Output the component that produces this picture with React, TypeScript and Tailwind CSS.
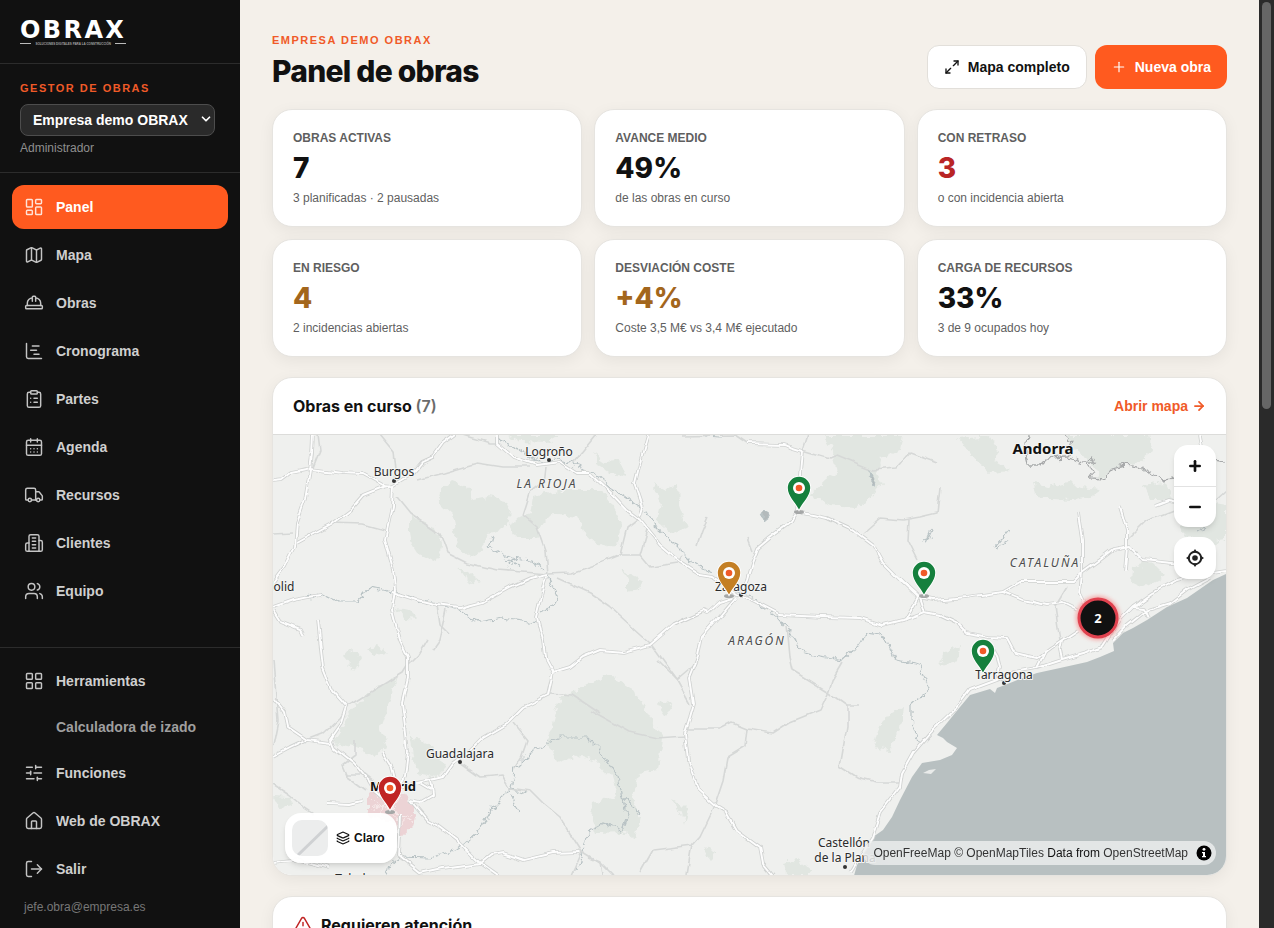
import React from 'react';
import {
  ArrowRight,
  CalendarDays,
  ChartGantt,
  ChevronDown,
  ClipboardList,
  HardHat,
  House,
  Layers,
  LayoutDashboard,
  LayoutGrid,
  LogOut,
  Map as MapIcon,
  Maximize2,
  Minus,
  Plus,
  SlidersHorizontal,
  TriangleAlert,
  Truck,
  Users,
} from 'lucide-react';

type IconType = React.ComponentType<{ className?: string; strokeWidth?: number }>;

// Tower with two side wings
const ClientsIcon: IconType = ({ className, strokeWidth = 2 }) => (
  <svg
    viewBox="0 0 24 24"
    fill="none"
    stroke="currentColor"
    strokeWidth={strokeWidth}
    strokeLinecap="round"
    strokeLinejoin="round"
    className={className}
    aria-hidden="true"
  >
    <path d="M6 22V4a2 2 0 0 1 2-2h8a2 2 0 0 1 2 2v18Z" />
    <path d="M6 12H4a2 2 0 0 0-2 2v6a2 2 0 0 0 2 2h2" />
    <path d="M18 9h2a2 2 0 0 1 2 2v9a2 2 0 0 1-2 2h-2" />
    <path d="M10 6h4M10 10h4M10 14h4M10 18h4" />
  </svg>
);

interface NavEntry {
  label: string;
  icon?: IconType;
  active?: boolean;
}

const mainNav: NavEntry[] = [
  { label: 'Panel', icon: LayoutDashboard, active: true },
  { label: 'Mapa', icon: MapIcon },
  { label: 'Obras', icon: HardHat },
  { label: 'Cronograma', icon: ChartGantt },
  { label: 'Partes', icon: ClipboardList },
  { label: 'Agenda', icon: CalendarDays },
  { label: 'Recursos', icon: Truck },
  { label: 'Clientes', icon: ClientsIcon },
  { label: 'Equipo', icon: Users },
];

const footerNav: NavEntry[] = [
  { label: 'Herramientas', icon: LayoutGrid },
  { label: 'Calculadora de izado' },
  { label: 'Funciones', icon: SlidersHorizontal },
  { label: 'Web de OBRAX', icon: House },
  { label: 'Salir', icon: LogOut },
];

const stats = [
  { label: 'Obras activas', value: '7', note: '3 planificadas · 2 pausadas', tone: 'text-[#111111]' },
  { label: 'Avance medio', value: '49%', note: 'de las obras en curso', tone: 'text-[#111111]' },
  { label: 'Con retraso', value: '3', note: 'o con incidencia abierta', tone: 'text-[#b92525]' },
  { label: 'En riesgo', value: '4', note: '2 incidencias abiertas', tone: 'text-[#a3661c]' },
  { label: 'Desviación coste', value: '+4%', note: 'Coste 3,5 M€ vs 3,4 M€ ejecutado', tone: 'text-[#a3661c]' },
  { label: 'Carga de recursos', value: '33%', note: '3 de 9 ocupados hoy', tone: 'text-[#111111]' },
];

const forests = [
  '437,493 452,482 467,487 473,500 488,497 503,500 510,510 509,521 503,530 488,533 483,550 470,557 457,545 455,530 453,517 440,505',
  '410,513 424,522 437,530 442,543 437,562 417,553 412,545 410,533',
  '533,497 563,490 600,490 610,503 622,523 618,543 607,547 587,537 577,517 553,513 543,523 537,537 517,537 510,523 530,513',
  '460,567 470,573 480,580 470,584',
  '823,435 903,435 900,450 880,458 877,473 883,483 870,498 857,507 830,505 810,495 826,480 837,473 833,450',
  '653,483 665,490 677,483 678,503 687,527 673,533 657,520 661,505',
  '593,453 605,461 617,460 627,477 612,474 600,466',
  '1067,435 1150,435 1153,450 1137,463 1113,468 1100,478 1090,460 1075,450',
  '1033,483 1050,487 1067,482 1080,488 1100,490 1090,497 1073,500 1050,499 1037,497',
  '1133,567 1150,562 1165,577 1143,588 1132,583',
  '1143,485 1165,482 1173,500 1150,500',
  '397,677 387,710 380,730 387,747 373,755 353,747 333,742 342,728 350,713 367,693 380,688',
  '342,657 350,648 362,658 355,672',
  '368,650 378,646 388,654 375,656',
  '410,733 420,741 433,747 447,767 437,777 417,773',
  '560,697 583,687 597,680 610,675 633,690 650,717 662,737 658,770 640,773 633,797 640,817 635,840 623,832 597,833 592,820 593,803 617,795 612,778 597,762 580,755 557,763 547,740',
  '877,733 883,718 903,707 900,728 890,750 873,747',
  '672,799 680,803 687,810 684,825 682,812',
  '657,702 663,698 671,708 666,715',
  '703,850 710,846 717,853 710,860',
  '785,862 797,859 812,870 808,875 787,875',
  '507,435 560,435 548,442 520,441',
  '958,439 990,436 998,450 993,460 1010,470 990,472 978,462',
  '393,609 410,611 418,619 404,618',
  '622,570 634,576 643,580 640,590 628,592 628,580',
  '945,653 960,646 958,660 940,665',
  '1180,495 1226,505 1226,540 1200,545 1180,530',
  '273,797 290,798 293,806 280,808',
];

const motorways = [
  'M313 434L312 455 310 470 305 500 297 523 295 547 285 567 273 583',
  'M273 480L282 479 290 473 310 469 342 473 363 474 383 485 393 486',
  'M393 485L392 507 385 540 393 570 395 590 392 610 397 630 400 640 408 657 408 677 402 703 405 727 408 753 405 777 400 787',
  'M393 485L413 473 422 462 433 457 443 443 455 434',
  'M393 485L383 487 363 495 350 510 330 525 315 533 297 543',
  'M497 435L497 443 513 457 537 465 560 462 577 473 590 473 610 492 627 510 640 520 660 545 680 562 700 575 713 577 737 593 757 603 780 615 823 617 860 618 883 625 903 620 925 612 940 615 957 623 967 633 990 637 1007 638 1015 653 1037 658 1050 648 1062 640 1077 630',
  'M803 450L801 475 798 510 790 522 770 537 758 547 752 563 747 580 740 597',
  'M803 513L827 518 853 530 873 545 883 563 900 580 918 597',
  'M737 597L720 617 702 637 698 657 690 677 694 703 690 717 685 733 688 760 698 790 717 807 727 813 737 830 760 847 763 863 773 875',
  'M733 598L720 602 708 613 703 611 673 625 650 645 623 652 600 650 583 657 570 667 553 672 548 695 523 707 507 723 483 737 467 753 453 763 443 777 417 783 400 787',
  'M553 672L545 657 543 640 540 630 537 617 547 577',
  'M318 620L320 640 323 667 332 690 347 707 342 723 330 740 333 747 353 763 367 780 373 790 385 800',
  'M273 698L285 713 288 727 307 740 330 743',
  'M273 757L290 748 307 740',
  'M410 800L427 820 440 827 457 840 480 863 497 875',
  'M400 815L398 855 420 873 443 868 480 863 490 855 503 853 523 860 553 853 580 852',
  'M273 863L300 860 330 868',
  'M273 607L293 600 320 595M392 592L417 600 437 605 460 608 483 602 510 587 530 578 547 574',
  'M273 611L280 622 300 630 303 636',
  'M430 780L432 795 420 802 410 800M418 783L430 790',
  'M382 752L390 765 394 780M327 803L350 804 362 801',
  'M1103 647L1120 620 1133 607 1153 593 1177 580 1200 574 1226 570',
  'M1113 641L1127 626 1147 610 1170 603 1187 590 1210 578',
  'M1133 607L1143 608 1148 618',
  'M1103 647L1087 653 1062 660 1037 668 1015 672 997 680 970 690 957 707 933 730 913 753 902 773 900 787 880 813 872 837 860 855 850 872',
  'M1078 513L1082 540 1082 573 1080 593 1086 605',
  'M1120 507L1127 530 1127 547 1125 570',
  'M1082 573L1100 560 1113 550 1130 547 1143 560 1173 563 1190 565',
  'M918 597L933 600 967 597 1003 592 1020 582 1073 582 1082 573',
  'M1003 592L1023 600 1047 605 1063 603 1077 610',
  'M925 612L920 597 908 586 900 578M918 597L905 620',
  'M990 643L997 655 1000 668 997 680',
  'M1062 640L1060 650 1062 660M1045 652L1037 668',
  'M648 435L640 463 635 483 643 507 640 517',
  'M747 443L783 444 803 450',
  'M1155 505L1168 500 1178 502M1200 435L1203 455',
];

const minorRoads = [
  'M417 480L443 473 477 463 503 467 530 467',
  'M380 434L393 450 395 470 394 480',
  'M397 497L410 513 440 533 447 553 467 563 497 570 547 574 570 573 600 563 620 555',
  'M547 574L545 550 537 527 523 515 530 493 543 483 545 467',
  'M557 578L590 593 610 607 650 643 677 680 690 703',
  'M330 523L363 524 385 530M273 534L292 533',
  'M318 434L320 450 312 470',
  'M460 434L490 443 497 443M575 460L595 435',
  'M620 555L627 527 640 517M620 555L640 555 650 567 677 563 683 555M640 555L648 527',
  'M708 516L702 530 697 545M748 537L753 550',
  'M787 625L790 657 793 670 830 693 847 705 847 727 840 767 857 778 877 783 900 783M847 705L859 705',
  'M688 729L720 729 732 723 747 729 773 733 790 722 820 710 828 693 832 680 842 663',
  'M747 729L745 747 727 758 723 780 713 810 700 837 693 845 653 850 640 873M693 845L688 875',
  'M590 710L630 732 657 738 685 736',
  'M657 660L677 680 697 663',
  'M803 450L830 458 837 455 873 470 897 468 910 453 937 463',
  'M863 533L880 518 903 520 920 517 937 513 940 487M908 520L907 540 917 560M683 436L735 435 747 443M808 435L803 450',
  'M1127 540L1147 520 1173 510M1067 587L1055 607 1060 640',
  'M427 640L418 655 408 665 403 673 380 687 348 707',
  'M273 785L288 795 303 807 315 815M273 745L278 720 273 660',
  'M342 717L325 733 307 740',
  'M513 723L527 740 521 757 513 770',
  'M460 763L480 777 503 775 510 787 530 790 543 803 560 817 582 852 572 875M582 852L600 863 612 875',
  'M550 693L573 695 600 713M437 605L440 625 450 635M433 650L440 640 447 610',
  'M355 740L355 755 342 765 347 777 365 790M345 775L365 775 378 785',
  'M590 858L600 862 602 875M1226 490L1215 500M1130 550L1140 553',
];

const rivers = [
  'M293 600L320 593 338 602 357 602 370 587 392 592 417 600 457 608 477 622 503 618 537 623',
  'M493 537L490 547 500 553 512 558 530 560 545 570',
  'M547 575L558 600 555 605 540 612',
  'M505 560L518 565M508 566L515 559M512 557L513 567',
  'M387 875L390 865 400 857 430 858 457 850 477 833 490 810 510 790 513 770 533 750 560 737 587 737 600 750 607 760 617 777 622 797 627 817 622 830 603 823 590 830 585 840 578 870',
  'M510 790L528 793M512 795L518 814M622 797L640 812',
  'M497 436L505 444 520 450 540 462 555 458 575 465 590 470 610 487 627 498 647 513 657 530 673 543 690 560 713 573',
  'M735 590L750 597 777 617 790 633 803 653 820 656 843 660 857 647 867 633 880 635 887 640 895 660 917 663 920 668 930 690 920 698 910 707 910 720 920 743',
];

const borders = [
  'M1027 435L1025 453 1028 465 1040 465 1047 458 1067 457 1087 463 1092 477 1103 478 1113 468 1125 465 1140 467 1160 480 1175 479',
  'M1063 435L1073 443 1067 457M1091 457L1096 463 1090 463Z',
  'M1216 460L1226 462',
];

interface PlaceLabel {
  name: string;
  x: number;
  y: number;
  className: string;
  dot?: [number, number];
}

const city = 'text-[12px] fill-[#2b2b2b]';
const region = 'text-[12px] italic tracking-[2px] fill-[#4d4d4d]';

const places: PlaceLabel[] = [
  { name: 'Logroño', x: 549, y: 456, className: city, dot: [549, 460] },
  { name: 'Burgos', x: 394, y: 476, className: city, dot: [394, 481] },
  { name: 'LA RIOJA', x: 547, y: 488, className: region },
  { name: 'Valladolid', x: 267, y: 591, className: city },
  { name: 'Zaragoza', x: 741, y: 591, className: city, dot: [741, 595] },
  { name: 'ARAGÓN', x: 757, y: 645, className: region },
  { name: 'CATALUÑA', x: 1045, y: 567, className: region },
  { name: 'Tarragona', x: 1004, y: 679, className: city, dot: [1004, 683] },
  { name: 'Guadalajara', x: 460, y: 758, className: city, dot: [460, 762] },
  { name: 'Castellón', x: 844, y: 847, className: city },
  { name: 'de la Plana', x: 845, y: 862, className: city, dot: [845, 867] },
  { name: 'Toledo', x: 354, y: 883, className: city },
  { name: 'Madrid', x: 393, y: 791, className: 'text-[13px] font-bold fill-[#111111]' },
  { name: 'Andorra', x: 1043, y: 454, className: 'text-[15px] font-bold fill-[#111111]' },
];

const pins = [
  { x: 799, y: 488, color: '#15803d' },
  { x: 924, y: 573, color: '#15803d' },
  { x: 983, y: 651, color: '#15803d' },
  { x: 729, y: 573, color: '#c47f24' },
  { x: 390, y: 788, color: '#c02424' },
];

const WorksMap = () => (
  <svg
    viewBox="273 435 953 440"
    preserveAspectRatio="xMidYMid slice"
    className="block h-full w-full font-['Noto_Sans',sans-serif]"
    role="img"
    aria-label="Obras en curso"
  >
    <defs>
      <filter id="rough" x="-5%" y="-5%" width="110%" height="110%" colorInterpolationFilters="sRGB">
        <feTurbulence type="fractalNoise" baseFrequency="0.12" numOctaves="3" seed="4" />
        <feDisplacementMap in="SourceGraphic" scale="10" xChannelSelector="R" yChannelSelector="G" />
      </filter>
      <filter id="wavy" x="-5%" y="-5%" width="110%" height="110%" colorInterpolationFilters="sRGB">
        <feTurbulence type="fractalNoise" baseFrequency="0.05" numOctaves="2" seed="9" />
        <feDisplacementMap in="SourceGraphic" scale="7" xChannelSelector="R" yChannelSelector="G" />
      </filter>
      <filter id="glow" x="-50%" y="-50%" width="200%" height="200%">
        <feGaussianBlur stdDeviation="2" />
      </filter>
    </defs>
    <rect x="273" y="435" width="953" height="440" fill="#eff0ee" />
    <g filter="url(#rough)" fill="#e1e6e1">
      {forests.map(points => (
        <polygon key={points} points={points} />
      ))}
    </g>
    <path
      d="M1240 568L1226 574 1213 580 1187 598 1167 607 1147 620 1133 628 1123 633 1113 643 1114 651 1100 657 1087 662 1060 668 1037 673 1020 679 1005 685 997 688 995 693 990 689 970 695 960 707 947 723 937 735 943 738 947 742 957 748 952 755 940 760 922 763 912 777 900 800 892 817 883 830 873 837 868 848 857 865 850 890H1240Z"
      fill="#b8c0c1"
    />
    <path d="M923 773L929 770 936 769 931 774Z" fill="#e9ebea" />
    <g filter="url(#rough)">
      <path
        d="M367 797L375 790 383 787 403 793 411 803 415 815 413 827 402 837 396 828 393 820 380 820 367 813Z"
        fill="#ecd3d5"
      />
      <path
        d="M371 800L405 817M376 792L398 820M370 809L402 796M385 788L381 818M396 830L411 812M390 808L412 822M400 797L385 816"
        stroke="#f7ebeb"
        strokeWidth="1"
        fill="none"
      />
    </g>
    <g filter="url(#rough)" fill="none" stroke="#b9c3c5" strokeWidth="1.2">
      {rivers.map(d => (
        <path key={d} d={d} />
      ))}
      <path d="M762 514L768 512 770 517 765 521ZM868 473L872 476 876 486 872 484Z" fill="#b3babb" />
      <path d="M925 545L932 530M922 540L932 538M996 545L1002 538 1010 528M998 547L1008 540" />
      <path d="M705 435L722 436M1195 532L1205 526" />
    </g>
    <g filter="url(#wavy)" fill="none" strokeLinejoin="round">
      <g stroke="#d6d8d7" strokeWidth="1.6">
        {minorRoads.map(d => (
          <path key={d} d={d} />
        ))}
      </g>
      <g stroke="#cfd1d0" strokeWidth="3.6">
        {motorways.map(d => (
          <path key={d} d={d} />
        ))}
      </g>
      <g stroke="#fdfdfd" strokeWidth="1.9">
        {motorways.map(d => (
          <path key={d} d={d} />
        ))}
      </g>
    </g>
    <g filter="url(#rough)" fill="none" stroke="#a8aaab" strokeWidth="1.3">
      {borders.map(d => (
        <path key={d} d={d} />
      ))}
    </g>
    <g fill="#a5a7a7">
      <ellipse cx="799" cy="512" rx="5" ry="2" />
      <ellipse cx="729" cy="596" rx="5" ry="2" />
      <ellipse cx="924" cy="596" rx="5" ry="2" />
      <ellipse cx="390" cy="812" rx="5" ry="2" />
    </g>
    <g textAnchor="middle" stroke="#f4f5f4" strokeWidth="2" strokeLinejoin="round" paintOrder="stroke">
      {places.map(place => (
        <React.Fragment key={place.name}>
          {place.dot && <circle cx={place.dot[0]} cy={place.dot[1]} r="2" fill="#333333" stroke="none" />}
          <text x={place.x} y={place.y} className={place.className}>
            {place.name}
          </text>
        </React.Fragment>
      ))}
    </g>
    {pins.map(pin => (
      <g key={`${pin.x}-${pin.y}`} transform={`translate(${pin.x} ${pin.y})`}>
        <path
          d="M0 21.5C-3.5 14.5-11.2 8-11.2 0a11.2 11.2 0 0 1 22.4 0C11.2 8 3.5 14.5 0 21.5Z"
          fill={pin.color}
          stroke="#ffffff"
          strokeWidth="2"
          paintOrder="stroke"
        />
        <circle r="6" fill="#ffffff" />
        <circle r="3.3" fill="#f05a28" />
      </g>
    ))}
    <circle cx="1098" cy="618" r="22" fill="#f87171" opacity="0.6" filter="url(#glow)" />
    <circle cx="1098" cy="618" r="19" fill="#111111" stroke="#e0424f" strokeWidth="3" />
    <text x="1098" y="623" textAnchor="middle" className="fill-white text-[13px] font-bold">
      2
    </text>
  </svg>
);

const NavLink: React.FC<{ entry: NavEntry }> = ({ entry }) => {
  const Icon = entry.icon;

  if (!Icon) {
    return (
      <a href="#" className="flex h-10 items-center rounded-xl pl-11 text-sm font-semibold text-[#9f9f9f]">
        {entry.label}
      </a>
    );
  }

  return (
    <a
      href="#"
      className={
        entry.active
          ? 'flex h-11 items-center gap-3 rounded-xl bg-[#ff5a1f] px-3 text-sm font-semibold text-white'
          : 'flex h-11 items-center gap-3 rounded-xl px-3 text-sm font-semibold text-[#cfcfcf]'
      }
    >
      <Icon className={entry.active ? 'size-5 text-[#ffe3d8]' : 'size-5 text-[#c4c4c4]'} strokeWidth={1.75} />
      {entry.label}
    </a>
  );
};

const Sidebar = () => (
  <aside className="flex w-60 shrink-0 flex-col bg-[#111111]">
    <div className="flex h-16 shrink-0 items-center border-b border-[#2c2c2c] px-5">
      <a href="#" className="flex flex-col items-center text-white">
        <span className="font-['DejaVu_Sans',sans-serif] text-2xl leading-6 font-bold tracking-widest">OBRAX</span>
        <span className="flex w-full items-center gap-1 text-[3px] leading-1 font-bold whitespace-nowrap text-[#a3a3a3]">
          <span className="h-px flex-1 bg-[#bbbbbb]" />
          SOLUCIONES DIGITALES PARA LA CONSTRUCCIÓN
          <span className="h-px flex-1 bg-[#bbbbbb]" />
        </span>
      </a>
    </div>

    <div className="border-b border-[#2c2c2c] px-5 py-4">
      <label htmlFor="company" className="block text-[11px] leading-4 font-bold tracking-[1.5px] text-[#f05a28] uppercase">
        Gestor de obras
      </label>
      <div className="relative mt-2 w-[195px]">
        <select
          id="company"
          className="block h-8 w-full appearance-none rounded-lg border border-[#4d4d4d] bg-[#2a2a2a] pr-6 pl-3 text-sm font-bold text-white"
        >
          <option>Empresa demo OBRAX</option>
        </select>
        <ChevronDown className="pointer-events-none absolute top-2 right-0.5 size-3.5 text-white" strokeWidth={3} />
      </div>
      <p className="mt-1 text-xs leading-4 text-[#8f8f8f]">Administrador</p>
    </div>

    <nav className="flex flex-1 flex-col gap-1 p-3">
      {mainNav.map(entry => (
        <NavLink key={entry.label} entry={entry} />
      ))}
    </nav>

    <div className="flex flex-col gap-1 border-t border-[#2c2c2c] px-3 pt-[11px] pb-[13px]">
      {footerNav.map(entry => (
        <NavLink key={entry.label} entry={entry} />
      ))}
      <p className="px-3 pt-1 text-xs leading-4 text-[#777777]">jefe.obra@empresa.es</p>
    </div>
  </aside>
);

const cardClass =
  'rounded-[20px] border border-[#e6e4e0] bg-white shadow-[0_4px_16px_rgba(17,17,17,0.06)]';

export default function App() {
  return (
    <div className="flex h-screen overflow-hidden bg-[#f4f0ea] font-['Liberation_Sans',Arial,sans-serif] text-[#111111]">
      <Sidebar />

      <main className="min-w-0 flex-1 overflow-y-auto p-8 [scrollbar-width:none]">
        <header className="flex items-end justify-between gap-4">
          <div>
            <p className="text-[11px] leading-4 font-bold tracking-[1.5px] text-[#f05a28] uppercase">
              Empresa demo OBRAX
            </p>
            <h1 className="mt-[5px] font-[Inter,sans-serif] text-[30px] leading-9 font-extrabold tracking-tight">
              Panel de obras
            </h1>
          </div>
          <div className="flex gap-2">
            <a
              href="#"
              className="flex h-11 items-center gap-2 rounded-xl border border-[#e2dfda] bg-white px-4 text-sm font-semibold"
            >
              <Maximize2 className="size-4" />
              Mapa completo
            </a>
            <button
              type="button"
              className="flex h-11 items-center gap-2 rounded-xl bg-[#ff5a1f] px-4 text-sm font-semibold text-white"
            >
              <Plus className="size-4" strokeWidth={1.75} />
              Nueva obra
            </button>
          </div>
        </header>

        <section className="mt-5 grid grid-cols-3 gap-3">
          {stats.map(stat => (
            <div key={stat.label} className={`${cardClass} px-5 py-[18px]`}>
              <p className="text-xs leading-5 font-semibold text-[#5f5f5f] uppercase">{stat.label}</p>
              <p className={`mt-1 font-[Inter,sans-serif] text-[28px] leading-8 font-extrabold ${stat.tone}`}>
                {stat.value}
              </p>
              <p className="mt-1 text-xs leading-5 text-[#5f5f5f]">{stat.note}</p>
            </div>
          ))}
        </section>

        <section className={`${cardClass} mt-5 overflow-hidden`}>
          <div className="flex h-[57px] items-center justify-between border-b border-[#dcdcda] px-5">
            <h2 className="font-[Inter,sans-serif] text-base font-bold">
              Obras en curso <span className="font-semibold text-[#6b6b6b]">(7)</span>
            </h2>
            <a href="#" className="flex items-center gap-1 text-sm font-semibold text-[#f05a28]">
              Abrir mapa
              <ArrowRight className="size-3.5" strokeWidth={3} />
            </a>
          </div>

          <div className="relative h-[440px]">
            <WorksMap />

            <div className="absolute top-2.5 right-2.5 flex flex-col gap-2.5">
              <div className="flex flex-col rounded-[14px] bg-white shadow-md">
                <button type="button" aria-label="Acercar" className="flex size-[42px] items-center justify-center border-b border-[#e2e2e2]">
                  <Plus className="size-4" strokeWidth={4} />
                </button>
                <button type="button" aria-label="Alejar" className="flex h-10 w-[42px] items-center justify-center">
                  <Minus className="size-4" strokeWidth={4} />
                </button>
              </div>
              <button type="button" aria-label="Mi ubicación" className="flex size-[42px] items-center justify-center rounded-[14px] bg-white shadow-md">
                <svg viewBox="0 0 20 20" className="size-5" fill="none" stroke="#222222" strokeWidth="2" aria-hidden="true">
                  <circle cx="10" cy="10" r="6.2" />
                  <circle cx="10" cy="10" r="2.8" fill="#222222" stroke="none" />
                  <path
                    d="M10 1L12.5 4.5H7.5ZM10 19L12.5 15.5H7.500ZM1 10L4.500 7.500V12.500ZM19 10L15.500 7.500V12.500Z"
                    fill="#222222"
                    stroke="none"
                  />
                </svg>
              </button>
            </div>

            <button
              type="button"
              className="absolute bottom-3 left-3 flex items-center gap-2 rounded-2xl bg-white/95 py-[7px] pr-3 pl-[7px] text-xs font-bold shadow-md"
            >
              <svg viewBox="0 0 36 36" className="size-9 rounded-[10px]" aria-hidden="true">
                <rect width="36" height="36" fill="#eceded" />
                <path d="M6 35L36 6" stroke="#cfd1d3" strokeWidth="3" />
              </svg>
              <span className="flex items-center gap-1">
                <Layers className="size-3.5" />
                Claro
              </span>
            </button>

            <div className="absolute right-2.5 bottom-2.5 flex h-6 items-center gap-2 rounded-full bg-white/60 pr-1 pl-2.5 text-xs whitespace-nowrap backdrop-blur-sm">
              <p>
                <a href="#" className="text-[#333333]">OpenFreeMap</a>{' '}
                <a href="#" className="text-[#333333]">© OpenMapTiles</a> Data from{' '}
                <a href="#" className="text-[#333333]">OpenStreetMap</a>
              </p>
              <button type="button" aria-label="Créditos" className="size-4">
                <svg viewBox="0 0 16 16" className="size-4" aria-hidden="true">
                  <circle cx="8" cy="8" r="7.5" fill="#000000" />
                  <circle cx="8" cy="4.3" r="1.4" fill="#ffffff" />
                  <path d="M6 7h3v4h1v1.300H6V11h1V8.300H6Z" fill="#ffffff" />
                </svg>
              </button>
            </div>
          </div>
        </section>

        <section className={`${cardClass} mt-5 flex h-[57px] items-center gap-2 px-5`}>
          <TriangleAlert className="size-5 text-[#c02424]" strokeWidth={1.75} />
          <h2 className="font-[Inter,sans-serif] text-base font-bold">Requieren atención</h2>
        </section>
      </main>

      {/* scroll track */}
      <div className="w-[15px] shrink-0 bg-[#2a2a2a] px-[3px] pt-0.5" aria-hidden="true">
        <div className="h-[44%] rounded-full bg-[#666666]" />
      </div>
    </div>
  );
}
